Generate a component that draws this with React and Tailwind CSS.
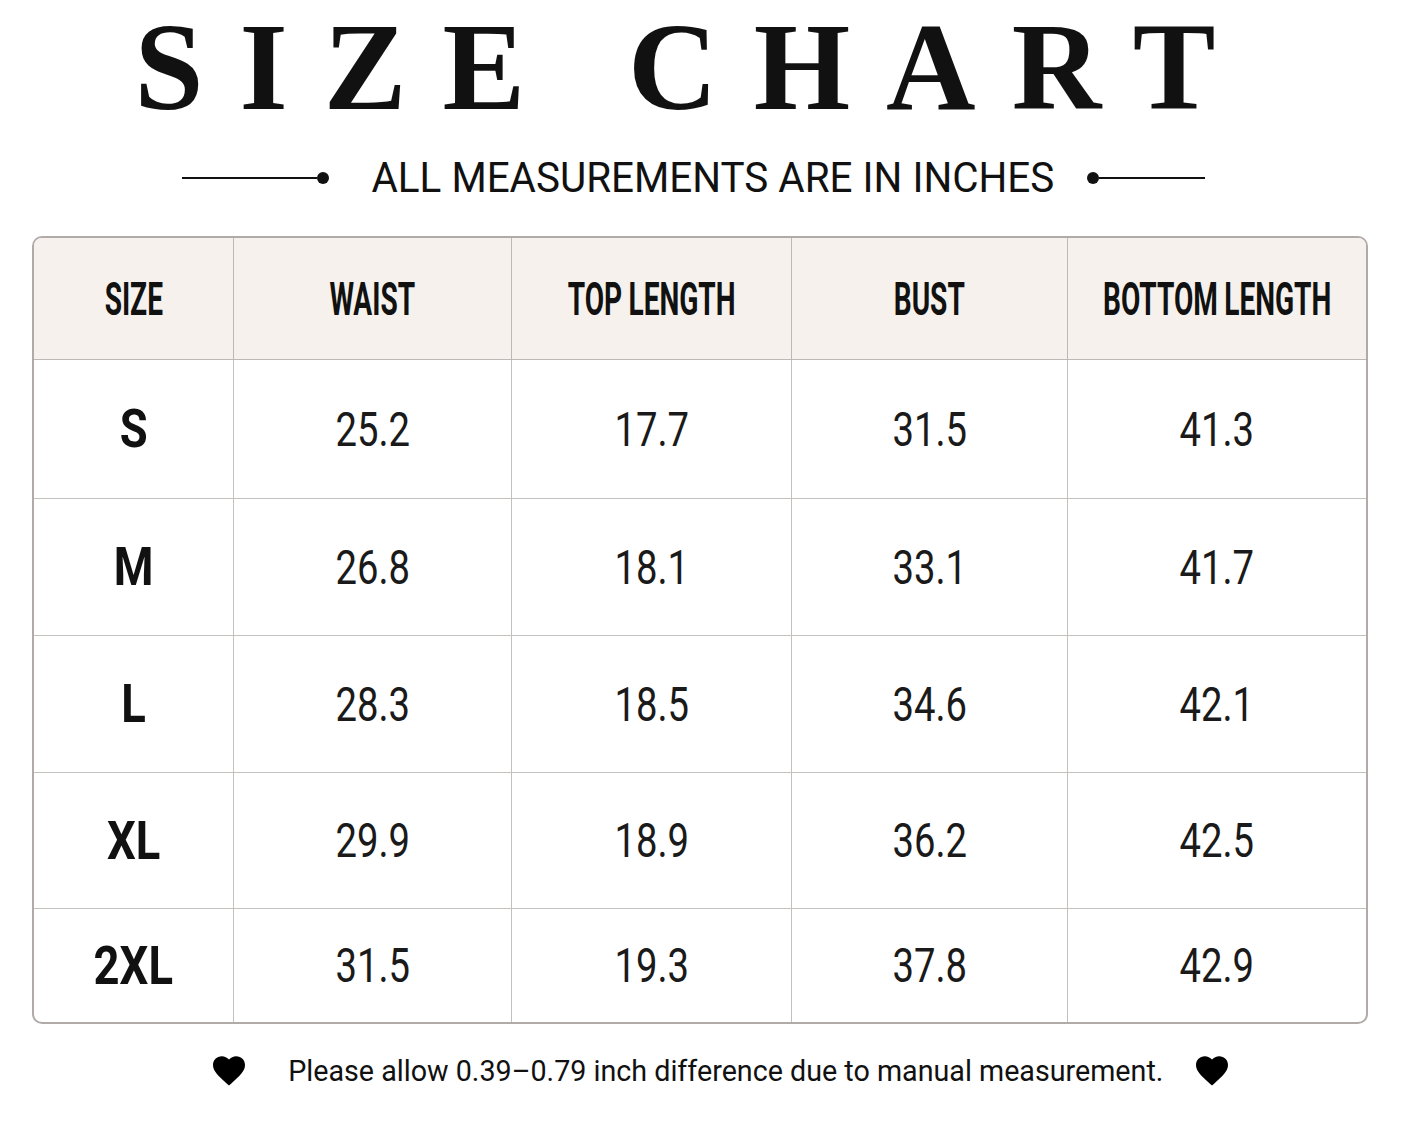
import React from "react";

const rows = [
  { size: "S", vals: ["25.2", "17.7", "31.5", "41.3"], h: "h-[139px]" },
  { size: "M", vals: ["26.8", "18.1", "33.1", "41.7"], h: "h-[137px]" },
  { size: "L", vals: ["28.3", "18.5", "34.6", "42.1"], h: "h-[137px]" },
  { size: "XL", vals: ["29.9", "18.9", "36.2", "42.5"], h: "h-[136px]" },
  { size: "2XL", vals: ["31.5", "19.3", "37.8", "42.9"], h: "h-[113px]" },
];

const headers = ["SIZE", "WAIST", "TOP LENGTH", "BUST", "BOTTOM LENGTH"];

function Heart() {
  return (
    <svg viewBox="2 3 20 18.5" className="w-[32px] h-[30px]" fill="#000">
      <path d="M12 21.35l-1.45-1.32C5.4 15.36 2 12.28 2 8.5 2 5.42 4.42 3 7.5 3c1.74 0 3.41.81 4.5 2.09C13.09 3.81 14.76 3 16.5 3 19.58 3 22 5.42 22 8.5c0 3.78-3.4 6.86-8.55 11.54L12 21.35z" />
    </svg>
  );
}

export default function App() {
  const cols = "grid grid-cols-[200px_278px_280px_276px_298px]";
  return (
    <div className="w-[1402px] h-[1122px] bg-white flex flex-col text-[#111]" style={{ fontFamily: "Roboto, 'Liberation Sans', sans-serif" }}>
      <div
        className="pt-[6px] text-center text-[124px] leading-none font-bold tracking-[36px] whitespace-nowrap pr-[16px]"
        style={{ fontFamily: "'Liberation Serif', serif" }}
      >
        SIZE CHART
      </div>

      <div className="mt-[27px] h-[42px] flex items-center pl-[182px]">
        <div className="w-[135px] h-[2px] bg-[#111]" />
        <div className="w-[12px] h-[12px] rounded-full bg-[#111]" />
        <div className="w-[43px]" />
        <div className="w-[681px] flex justify-center">
          <span className="inline-block whitespace-nowrap text-[42px] leading-none scale-x-[0.962]">
            ALL MEASUREMENTS ARE IN INCHES
          </span>
        </div>
        <div className="w-[34px]" />
        <div className="w-[12px] h-[12px] rounded-full bg-[#111]" />
        <div className="w-[106px] h-[2px] bg-[#111]" />
      </div>

      <div className="mt-[37px] ml-[32px] w-[1336px] border-2 border-[#b0aba8] rounded-[10px] overflow-hidden">
        <div className={`${cols} h-[122px] bg-[#f6f1ec] border-b border-[#bdb8b5]`}>
          {headers.map((h, i) => (
            <div
              key={h}
              className={`flex items-center justify-center ${i < 4 ? "border-r border-[#bdb8b5]" : ""}`}
            >
              <span className="inline-block whitespace-nowrap text-[46px] leading-none font-bold scale-x-[0.61] [word-spacing:-1px]">
                {h}
              </span>
            </div>
          ))}
        </div>
        {rows.map((r, ri) => (
          <div
            key={r.size}
            className={`${cols} ${r.h} ${ri < rows.length - 1 ? "border-b border-[#c4c0bd]" : ""}`}
          >
            <div className="flex items-center justify-center border-r border-[#c4c0bd]">
              <span className="inline-block whitespace-nowrap text-[54px] leading-none font-bold scale-x-[0.84]">
                {r.size}
              </span>
            </div>
            {r.vals.map((v, i) => (
              <div
                key={i}
                className={`flex items-center justify-center ${i < 3 ? "border-r border-[#c4c0bd]" : ""}`}
              >
                <span className="inline-block whitespace-nowrap text-[49px] leading-none font-normal text-[#1a1a1a] scale-x-[0.78]">
                  {v}
                </span>
              </div>
            ))}
          </div>
        ))}
      </div>

      <div className="mt-[32px] h-[30px] flex items-center pl-[213px]">
        <Heart />
        <div className="w-[44px]" />
        <div className="w-[873px] flex justify-center">
          <span className="inline-block whitespace-nowrap text-[30px] leading-none scale-x-[0.956]">
            Please allow 0.39–0.79 inch difference due to manual measurement.
          </span>
        </div>
        <div className="w-[34px]" />
        <Heart />
      </div>
    </div>
  );
}
